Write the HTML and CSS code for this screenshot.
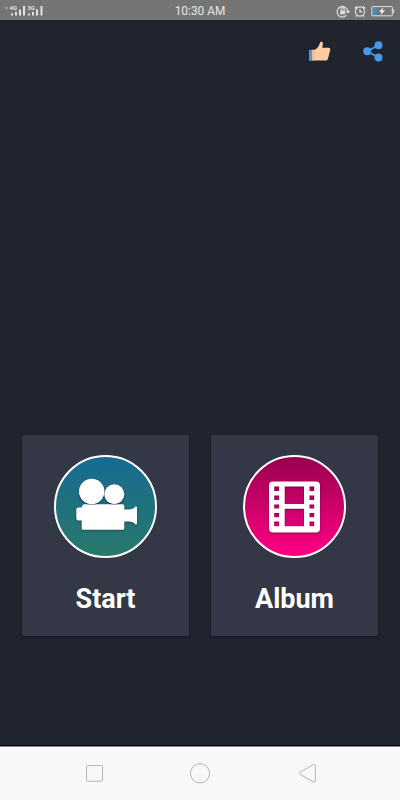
FILE: index.html
```html
<!DOCTYPE html>
<html lang="en">
<head>
<meta charset="utf-8">
<title>Video Maker</title>
<link rel="stylesheet" href="styles.css">
</head>
<body>
<header class="status">
  <div class="signal">
    <svg width="46" height="20" viewBox="0 0 46 20">
      <circle cx="6.500" cy="7" r="1.800" fill="#949494"/>
      <g fill="#e2e2e2">
        <text x="9.500" y="9" class="net">4G</text><text x="27.200" y="9" class="net">3G</text>
        <path d="M11 12.500h2v2h-2zM15 11h2v3.500h-2zM19 8.500h2v6h-2zM23 5h2v9.500h-2zM28 12.500h2v2h-2zM32 11h2v3.500h-2zM36 8.500h2v6h-2zM40.500 5h2v9.500h-2z"/>
      </g>
    </svg>
  </div>
  <span class="clock">10:30 AM</span>
  <div class="indicators">
    <svg width="64" height="20" viewBox="336 0 64 20" fill="none" stroke="#dedede" stroke-width="1.200">
      <path d="M346.500 14.200A5.300 5.300 0 1 1 347.700 10"/>
      <path d="M345.500 9.800h4.800l-2.400 2.900z" fill="#dedede" stroke="none"/>
      <rect x="340.200" y="9.400" width="5" height="4" fill="#dedede" stroke="none"/>
      <path d="M341.200 9.500V8.200a1.500 1.500 0 0 1 3 0v1.300"/>
      <circle cx="360" cy="10.500" r="4.600"/>
      <path d="M360 8v2.800h2.300M354.700 7.500l2.400-2.300M365.300 7.500l-2.400-2.300M356.800 14.500l-1 1.200M363.200 14.500l1 1.200"/>
      <rect x="371.800" y="5.600" width="20.500" height="9.200" rx=".6" stroke-width="1"/>
      <rect x="373" y="6.500" width="3.200" height="7.400" fill="#2299f5" stroke="none"/>
      <path d="M393.500 8.200v4"/>
      <path d="M383.300 6.500l-4.300 4.200h2.500l-1 3.300 4.700-4.500h-2.700z" fill="#f4f4f4" stroke="none"/>
    </svg>
  </div>
</header>
<main class="app">
  <nav class="actions">
    <svg width="22" height="20" viewBox="0 0 22 20">
      <path d="M0 8.800h3.500v11H0z" fill="#4598ea"/>
      <path d="M3 8.800h3v10.800H3z" fill="#f5b891"/>
      <path d="M5.500 8.800C8.500 7.800 10.200 5 11 1.500c.3-1.200 2.500-1.300 2.800.7.200 1.400-.2 3.200-.6 4.600h6c1.800 0 2.400 1.100 2 2.500L19 17.500c-.4 1.500-1.100 2.100-2.400 2.100H5.500z" fill="#ffcca2"/>
    </svg>
    <svg width="20" height="21" viewBox="0 0 20 21" fill="#4598ea">
      <path d="M15.500 4.200L4.200 10.300l11.300 6.200" fill="none" stroke="#4598ea" stroke-width="1.800"/>
      <circle cx="15.500" cy="4.200" r="4"/><circle cx="4.200" cy="10.300" r="4"/><circle cx="15.500" cy="16.500" r="4"/>
    </svg>
  </nav>
  <section class="cards">
    <a class="card">
      <span class="disc disc-start">
        <svg class="glyph" width="103" height="103" viewBox="0 0 103 103" fill="#fff">
          <path d="M29.200 49.200h39.600q1.500 0 1.500 1.500v3.800h5q5.200-.6 5.900-3h.8q1 0 1 1v16q0 1-1 1h-.8q-.7-2.400-5.900-3h-5v6.700q0 1.500-1.500 1.500H29.200q-1.500 0-1.500-1.500v-7.700h-3.400q-2 0-2-2v-9q0-2 2-2h3.400v-.8q0-1.500 1.500-1.500z"/>
          <g class="reels"><circle cx="37.700" cy="36.500" r="12.700"/><circle cx="60.300" cy="39.200" r="10"/></g>
        </svg>
      </span>
      <span class="label">Start</span>
    </a>
    <a class="card">
      <span class="disc disc-album">
        <svg class="glyph" width="103" height="103" viewBox="0 0 103 103" fill="#fff">
          <path fill-rule="evenodd" d="M30 26.500h43q4 0 4 4v43q0 4-4 4H30q-4 0-4-4v-43q0-4 4-4zM41.700 31.500v17.400H61V31.500zM41.700 53.700v17.600H61V53.700zM31.200 31.500V36h4.900v-4.500zM31.200 40.500v4.400h4.900v-4.400zM31.200 49.400v4.200h4.900v-4.200zM31.200 57.900v4.400h4.900v-4.400zM31.200 66.600v4.700h4.900v-4.700zM66.500 31.500V36h4.700v-4.500zM66.500 40.500v4.400h4.700v-4.400zM66.500 49.400v4.200h4.700v-4.200zM66.500 57.900v4.400h4.700v-4.400zM66.500 66.600v4.700h4.700v-4.700z"/>
        </svg>
      </span>
      <span class="label">Album</span>
    </a>
  </section>
</main>
<footer class="navbar">
  <svg width="400" height="53" viewBox="0 747 400 53" fill="none" stroke="#b4b4b4" stroke-width="1">
    <rect x="86.500" y="765.500" width="16" height="15.700" rx="1"/>
    <circle cx="200" cy="773.300" r="9.600"/>
    <path d="M313.500 764.500q1.800-1 1.800 1v15.500q0 2-1.800 1l-13.500-7.700q-1.700-1 0-2z"/>
  </svg>
</footer>
</body>
</html>
```
FILE: styles.css
```css
* { box-sizing: border-box; }
body {
  margin: 0;
  width: 400px;
  height: 800px;
  display: flex;
  flex-direction: column;
  overflow: hidden;
  background: #20242f;
  font-family: Roboto, "Liberation Sans", sans-serif;
}
svg { display: block; }
.status {
  height: 20px;
  display: grid;
  grid-template-columns: 1fr auto 1fr;
  align-items: center;
  background: #757575;
}
.net { font-size: 6px; font-weight: 700; }
.clock {
  font-size: 11.9px;
  line-height: 20px;
  padding-top: 1px;
  color: #e6e6e6;
}
.indicators { justify-self: end; }
.app {
  flex: 1;
  display: flex;
  flex-direction: column;
  justify-content: space-between;
  border-top: 1px solid #191e2b;
}
.actions {
  display: flex;
  justify-content: flex-end;
  gap: 32px;
  padding: 20px 17px 0 0;
}
.cards {
  display: flex;
  gap: 22px;
  padding: 0 22px 109.500px;
}
.card {
  flex: 1;
  height: 200.500px;
  padding-top: 19.500px;
  display: flex;
  flex-direction: column;
  align-items: center;
  background: #343846;
  border-radius: 2px;
  box-shadow: 0 1px 3px rgba(0, 0, 0, .35);
}
.disc {
  width: 103px;
  height: 103px;
  border-radius: 50%;
  border: 2px solid #fff;
}
.disc-start { background: linear-gradient(#176b91, #28796a); }
.disc-album { background: linear-gradient(#99004f, #ff0084); }
.glyph {
  margin: -2px;
  filter: drop-shadow(0 1px 1px rgba(0, 0, 0, .35));
}
.reels { filter: drop-shadow(0 1px .6px rgba(0, 0, 0, .3)); }
.label {
  margin-top: 23.500px;
  font-size: 27px;
  line-height: 36px;
  font-weight: 700;
  color: #fff;
}
.navbar {
  height: 55px;
  background: #f8f8f8;
  border-top: 1px solid #000;
  box-shadow: inset 0 1px #8a8a8e;
}
.navbar svg { margin-top: 1px; }
```
